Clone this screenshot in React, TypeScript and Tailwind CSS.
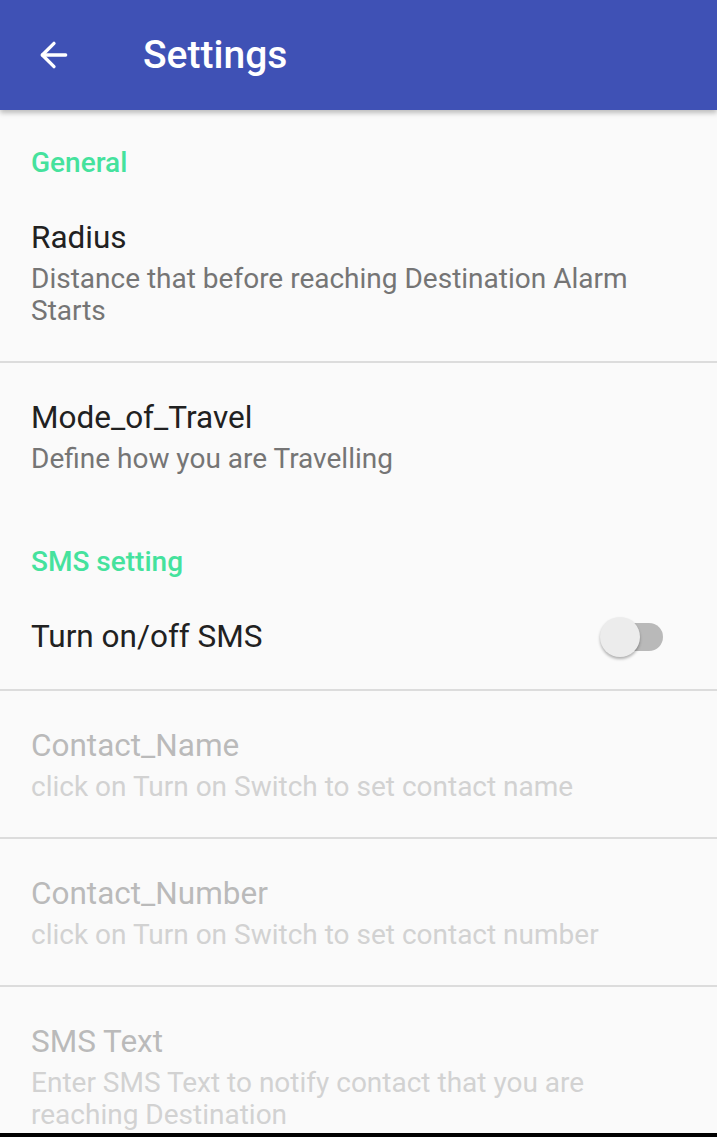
import { ArrowLeft } from "lucide-react";

type Item = { title: string; summary?: string; disabled?: boolean; toggle?: boolean };

const general: Item[] = [
    { title: "Radius", summary: "Distance that before reaching Destination Alarm Starts" },
    { title: "Mode_of_Travel", summary: "Define how you are Travelling" },
];

const sms: Item[] = [
    { title: "Turn on/off SMS", toggle: true },
    { title: "Contact_Name", summary: "click on Turn on Switch to set contact name", disabled: true },
    { title: "Contact_Number", summary: "click on Turn on Switch to set contact number", disabled: true },
    { title: "SMS Text", summary: "Enter SMS Text to notify contact that you are reaching Destination", disabled: true },
];

function Category({ label }: { label: string }) {
    return (
        <div className="px-[31px] pt-[37px] pb-[4px] text-[28px] leading-[32px] font-medium text-[#45e29d]">
            {label}
        </div>
    );
}

function Row({ item, last }: { item: Item; last: boolean }) {
    return (
        <div className={`flex items-center pl-[31px] pr-[54px] pt-[37px] pb-[34px] ${last ? "" : "border-b-2 border-[#dcdcdc]"}`}>
            <div className="flex-1">
                <div className={`text-[31.5px] leading-[36px] ${item.disabled ? "text-[#bababa]" : "text-[#212121]"}`}>
                    {item.title}
                </div>
                {item.summary && (
                    <div className={`mt-[7px] text-[28px] leading-[32px] ${item.disabled ? "text-[#d2d2d2]" : "text-[#757575]"}`}>
                        {item.summary}
                    </div>
                )}
            </div>
            {item.toggle && (
                <div className="relative w-[63px] h-[36px] flex items-center">
                    <div className="absolute left-[5px] right-0 h-[28px] rounded-full bg-[#b9b9b9]" />
                    <div className="absolute left-0 top-[-2px] w-[40px] h-[40px] rounded-full bg-[#ececec] shadow-[0_2px_3px_rgba(0,0,0,0.3)]" />
                </div>
            )}
        </div>
    );
}

export default function App() {
    return (
        <div className="flex flex-col h-[1137px] w-[717px] bg-[#fafafa] font-['Roboto',sans-serif] overflow-hidden">
            <div className="relative z-10 flex items-center h-[110px] bg-[#3f51b5] shadow-[0_3px_5px_rgba(0,0,0,0.25)] shrink-0">
                <ArrowLeft className="ml-[34px] w-[40px] h-[40px] text-white" strokeWidth={2} />
                <span className="ml-[69px] text-[39px] font-medium text-white">Settings</span>
            </div>
            <div className="flex-1 overflow-hidden">
                <Category label="General" />
                {general.map((it, i) => (
                    <Row key={it.title} item={it} last={i === general.length - 1} />
                ))}
                <Category label="SMS setting" />
                {sms.map((it, i) => (
                    <Row key={it.title} item={it} last={i === sms.length - 1} />
                ))}
            </div>
            <div className="h-[4px] bg-black shrink-0" />
        </div>
    );
}
